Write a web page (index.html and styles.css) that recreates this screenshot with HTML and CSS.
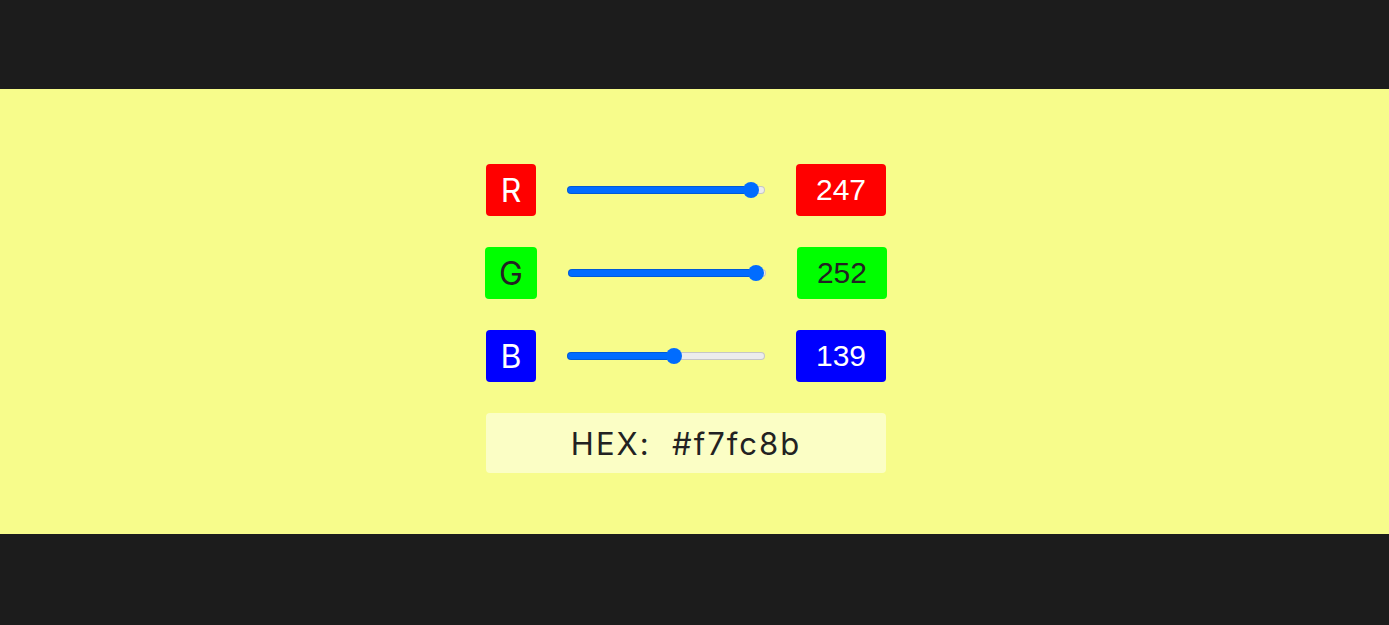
FILE: index.html
```html
<!DOCTYPE html>
<html lang="en">
<head>
<meta charset="utf-8">
<title>RGB Color Picker</title>
<link rel="stylesheet" href="styles.css">
</head>
<body>
<div class="page">
  <section class="band">
    <div class="panel">
      <div class="row">
        <div class="chip chip-r">R</div>
        <input class="slider" type="range" min="0" max="255" value="247" style="--fill: 93.6%">
        <div class="value chip-r">247</div>
      </div>
      <div class="row">
        <div class="chip chip-g">G</div>
        <input class="slider" type="range" min="0" max="255" value="252" style="--fill: 95.4%">
        <div class="value chip-g">252</div>
      </div>
      <div class="row">
        <div class="chip chip-b">B</div>
        <input class="slider" type="range" min="0" max="255" value="139" style="--fill: 54.1%">
        <div class="value chip-b">139</div>
      </div>
      <div class="hex">HEX:&nbsp; #f7fc8b</div>
    </div>
  </section>
</div>
</body>
</html>
```

FILE: styles.css
```css
html, body {
  margin: 0;
  padding: 0;
  background: #1c1c1c;
}

.page {
  height: 625px;
  display: flex;
  flex-direction: column;
  justify-content: center;
}

.band {
  height: 445px;
  margin-top: -2px;
  background: #f7fc8b;
  box-sizing: border-box;
  padding-top: 75px;
  padding-right: 17px;
  display: flex;
  justify-content: center;
  align-items: flex-start;
}

.panel {
  display: flex;
  flex-direction: column;
  align-items: center;
  gap: 31px;
}

.row {
  display: flex;
  align-items: center;
  gap: 31px;
}

.chip {
  height: 52px;
  min-width: 50px;
  box-sizing: border-box;
  padding: 0 14px;
  border-radius: 4px;
  display: flex;
  align-items: center;
  justify-content: center;
  font-family: Inter, Roboto, "Liberation Sans", sans-serif;
  font-size: 32px;
  color: #ffffff;
}

.chip-r { background: #ff0000; color: #ffffff; }
.chip-g { background: #00ff00; color: #222222; }
.chip-b { background: #0000ff; color: #ffffff; }

.slider {
  -webkit-appearance: none;
  appearance: none;
  width: 198px;
  height: 16px;
  margin: 0;
  background: transparent;
}

.slider::-webkit-slider-runnable-track {
  height: 8px;
  border-radius: 4px;
  background: linear-gradient(to right, #006cff var(--fill), #ececec var(--fill));
  box-shadow: inset 0 0 0 1px rgba(0, 0, 0, 0.16);
}

.slider::-webkit-slider-thumb {
  -webkit-appearance: none;
  appearance: none;
  width: 16px;
  height: 16px;
  margin-top: -4px;
  border-radius: 50%;
  background: #006cff;
  border: none;
}

.value {
  width: 90px;
  height: 52px;
  border-radius: 4px;
  display: flex;
  align-items: center;
  justify-content: center;
  font-family: "Liberation Sans", Arial, sans-serif;
  font-size: 30px;
}

.hex {
  width: 400px;
  height: 60px;
  border-radius: 4px;
  background: #fbfec5;
  display: flex;
  align-items: center;
  justify-content: center;
  font-family: Inter, Roboto, "Liberation Sans", sans-serif;
  font-size: 31px;
  letter-spacing: 2px;
  color: #222222;
}
```
